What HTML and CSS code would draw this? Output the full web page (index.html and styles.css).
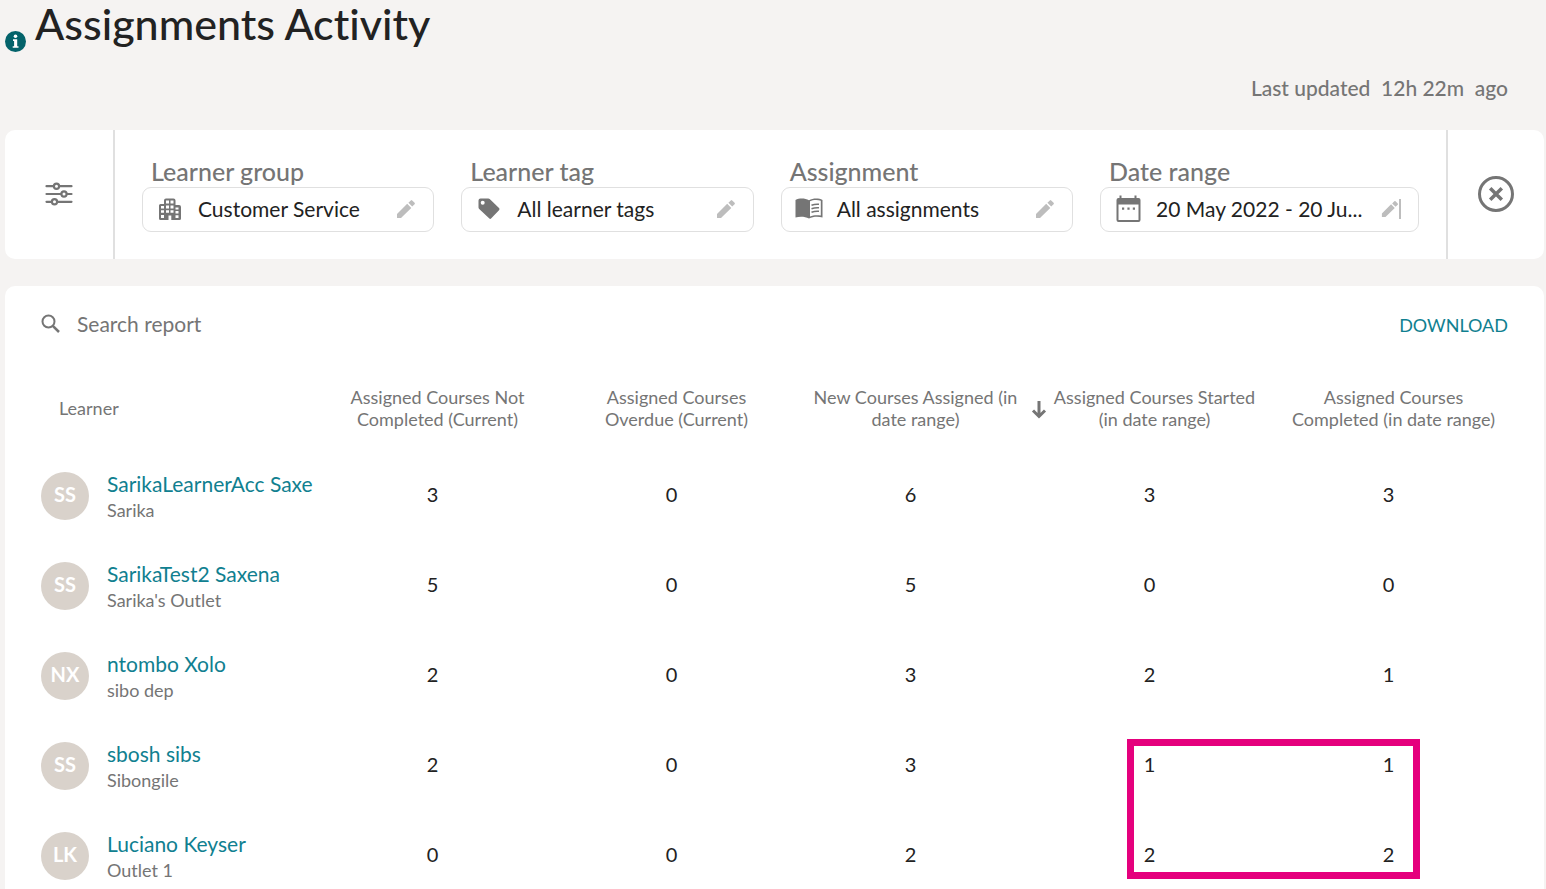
FILE: index.html
```html
<!DOCTYPE html>
<html lang="en">
<head>
    <meta charset="UTF-8">
    <meta name="viewport" content="width=device-width, initial-scale=1.0">
    <title>Assignments Activity</title>
    <link rel="stylesheet" href="styles.css">
</head>
<body>
    <svg class="sprite" aria-hidden="true">
        <symbol id="pencil" viewBox="0 0 20 20">
            <path d="M1 15V19h4L15.300 9 11.200 4.800zM18.600 5.200a1 1 0 0 0 0-1.400l-2.400-2.400a1 1 0 0 0-1.400 0L12.400 3.800l3.800 3.800z"/>
        </symbol>
    </svg>

    <header class="page-header">
        <svg class="info-icon" viewBox="0 0 21 21">
            <circle cx="10.500" cy="10.500" r="10.500" fill="#04636b"/>
            <circle cx="10.500" cy="5.300" r="1.800" fill="#fff"/>
            <path d="M8 8.300h4.200v6.900h1.300v1.600H7.700v-1.600h1.400V9.900H8z" fill="#fff"/>
        </svg>
        <h1>Assignments Activity</h1>
    </header>
    <p class="updated">Last updated&nbsp; 12h 22m&nbsp; ago</p>

    <section class="filters">
        <button class="filters-toggle" aria-label="Filters">
            <svg width="28" height="24" viewBox="0 0 28 24" fill="#fff" stroke="#757575" stroke-width="2.200">
                <path d="M1.500 4.200h25M1.500 12h25M1.500 19.800h25" stroke-linecap="round"/>
                <circle cx="11.500" cy="4.200" r="2.600"/>
                <circle cx="19" cy="12" r="2.600"/>
                <circle cx="9.500" cy="19.800" r="2.600"/>
            </svg>
        </button>
        <div class="filters-fields">
            <div class="field">
                <label for="group">Learner group</label>
                <button id="group" class="picker">
                    <svg class="picker-icon" width="28" height="28" viewBox="0 0 28 28">
                        <path d="M10 3.500h7.500a2 2 0 0 1 2 2V10H23a2 2 0 0 1 2 2v11.500a1.500 1.500 0 0 1-1.500 1.500h-19A1.500 1.500 0 0 1 3 23.500V10.500A1.500 1.500 0 0 1 4.500 9H8V5.500a2 2 0 0 1 2-2z"/>
                        <path fill="#fff" d="M10 5.500h3v3h-3zM14.500 5.500h3v3h-3zM10 10.500h3v3h-3zM14.500 10.500h3v3h-3zM10 15.200h3v2.600h-3zM14.500 15.200h3v2.600h-3zM5 11h3v2.500H5zM5 15.200h3v2.600H5zM5 20h3v3H5zM19.500 12.500h3v2h-3zM19.500 16h3v2.500h-3zM19.500 20.200h3v2.800h-3zM12.500 20.500h2.800V25h-2.800z"/>
                    </svg>
                    <span>Customer Service</span>
                    <svg class="pencil"><use href="#pencil"/></svg>
                </button>
            </div>
            <div class="field">
                <label for="tag">Learner tag</label>
                <button id="tag" class="picker">
                    <svg class="picker-icon" width="28" height="28" viewBox="0 0 28 28">
                        <path fill-rule="evenodd" d="M5.500 3.500h7.800a2 2 0 0 1 1.400.600l9.300 9a1.500 1.500 0 0 1 0 2.200l-7.700 8a1.500 1.500 0 0 1-2.200 0L4.200 14a2 2 0 0 1-.7-1.500v-7a2 2 0 0 1 2-2zM7.700 5.800a2 2 0 1 0 0 4 2 2 0 0 0 0-4z"/>
                    </svg>
                    <span>All learner tags</span>
                    <svg class="pencil"><use href="#pencil"/></svg>
                </button>
            </div>
            <div class="field">
                <label for="assignment">Assignment</label>
                <button id="assignment" class="picker">
                    <svg class="picker-icon" width="28" height="28" viewBox="0 0 28 28">
                        <path d="M.5 5C4 3 10 3 14 5.200 18 3 24 3 27.500 5v17.500c-4-1-9.500-1-13.500 1-4-2-9.500-2-13.500-1z"/>
                        <path fill="#fff" d="M15 6.300c3-1.400 7.500-1.600 10.800-.5v14.800c-3.500-.8-7.600-.5-10.800.8z"/>
                        <path fill="none" stroke="#757575" stroke-width="1.500" d="M16.500 10.300q3.500-1.400 7.500-1M16.500 13.800q3.500-1.400 7.500-1M16.500 17.300q3.500-1.400 7.500-1"/>
                    </svg>
                    <span>All assignments</span>
                    <svg class="pencil"><use href="#pencil"/></svg>
                </button>
            </div>
            <div class="field">
                <label for="range">Date range</label>
                <button id="range" class="picker">
                    <svg class="picker-icon" width="28" height="28" viewBox="0 0 28 28">
                        <path fill-rule="evenodd" d="M5.500.500h2V3h13V.500h2V3h2A2 2 0 0 1 26.500 5v20a2 2 0 0 1-2 2h-20a2 2 0 0 1-2-2V5a2 2 0 0 1 2-2h1zM4.500 9.500V25h20V9.500z"/>
                        <path d="M8 12.500h2.200v2.200H8zM13.400 12.500h2.200v2.200h-2.200zM18.800 12.500H21v2.200h-2.200z"/>
                    </svg>
                    <span>20 May 2022 - 20 Ju...</span>
                    <svg class="pencil pencil-bar"><use href="#pencil"/></svg>
                </button>
            </div>
        </div>
        <button class="filters-clear" aria-label="Clear filters">
            <svg width="36" height="36" viewBox="0 0 36 36" fill="none" stroke="#757575">
                <circle cx="18" cy="18" r="16.500" stroke-width="3"/>
                <path d="M12.200 12.200l11.600 11.600M23.800 12.200L12.200 23.800" stroke-width="3.500"/>
            </svg>
        </button>
    </section>

    <section class="report">
        <div class="toolbar">
            <label for="search" aria-label="Search report">
                <svg width="20" height="20" viewBox="0 0 20 20" fill="none" stroke="#757575" stroke-width="2">
                    <circle cx="7.500" cy="7.500" r="6"/>
                    <path d="M11.800 11.800l6.200 6.200" stroke-width="2.500"/>
                </svg>
            </label>
            <input type="text" id="search" placeholder="Search report">
            <button class="download">DOWNLOAD</button>
        </div>
        <table>
            <thead>
                <tr>
                    <th class="learner">Learner</th>
                    <th>Assigned Courses Not<br>Completed (Current)</th>
                    <th>Assigned Courses<br>Overdue (Current)</th>
                    <th>New Courses Assigned (in<br>date range)</th>
                    <th class="sorted">
                        <svg class="sort-arrow" viewBox="0 0 16 18" fill="none" stroke="#757575" stroke-width="3">
                            <path d="M8 0v15M2 9.500l6 6 6-6"/>
                        </svg>
                        Assigned Courses Started<br>(in date range)
                    </th>
                    <th>Assigned Courses<br>Completed (in date range)</th>
                </tr>
            </thead>
            <tbody>
                <tr>
                    <td>
                        <div class="person">
                            <span class="avatar">SS</span>
                            <div class="person-text"><a href="#">SarikaLearnerAcc Saxe</a><small>Sarika</small></div>
                        </div>
                    </td>
                    <td>3</td><td>0</td><td>6</td><td>3</td><td>3</td>
                </tr>
                <tr>
                    <td>
                        <div class="person">
                            <span class="avatar">SS</span>
                            <div class="person-text"><a href="#">SarikaTest2 Saxena</a><small>Sarika's Outlet</small></div>
                        </div>
                    </td>
                    <td>5</td><td>0</td><td>5</td><td>0</td><td>0</td>
                </tr>
                <tr>
                    <td>
                        <div class="person">
                            <span class="avatar">NX</span>
                            <div class="person-text"><a href="#">ntombo Xolo</a><small>sibo dep</small></div>
                        </div>
                    </td>
                    <td>2</td><td>0</td><td>3</td><td>2</td><td>1</td>
                </tr>
                <tr>
                    <td>
                        <div class="person">
                            <span class="avatar">SS</span>
                            <div class="person-text"><a href="#">sbosh sibs</a><small>Sibongile</small></div>
                        </div>
                    </td>
                    <td>2</td><td>0</td><td>3</td><td class="marked">1<span class="highlight"></span></td><td>1</td>
                </tr>
                <tr>
                    <td>
                        <div class="person">
                            <span class="avatar">LK</span>
                            <div class="person-text"><a href="#">Luciano Keyser</a><small>Outlet 1</small></div>
                        </div>
                    </td>
                    <td>0</td><td>0</td><td>2</td><td>2</td><td>2</td>
                </tr>
            </tbody>
        </table>
    </section>
</body>
</html>
```
FILE: styles.css
```css
* {
    box-sizing: border-box;
}
body {
    margin: 0;
    padding: 0 2px 0 5px;
    background: #f5f3f2;
    color: #222;
    font-family: Lato, sans-serif;
    font-size: 21px;
    font-variant-ligatures: none;
}
button, input {
    font: inherit;
    font-variant-ligatures: none;
    color: inherit;
    background: none;
    border: none;
    padding: 0;
}
button {
    cursor: pointer;
}
.sprite {
    display: none;
}
.page-header {
    display: flex;
    align-items: flex-end;
    gap: 9px;
    height: 52px;
}
.info-icon {
    width: 21px;
    height: 21px;
}
h1 {
    margin: 0;
    font-size: 43px;
    font-weight: 500;
    line-height: 56px;
}
.updated {
    margin: 23px 36px 29px;
    color: #757575;
    font-weight: 500;
    line-height: 26px;
    text-align: right;
}

/* Filter bar */
.filters {
    display: flex;
    height: 129px;
    background: #fff;
    border-radius: 10px;
}
.filters-toggle {
    width: 110px;
    padding-top: 2px;
    border-right: 2px solid #e0e0e0;
}
.filters-clear {
    width: 98px;
    padding-top: 2px;
    border-left: 2px solid #e0e0e0;
}
.filters-fields {
    flex: 1;
    display: grid;
    grid-template-columns: 11fr 11fr 11fr 12fr;
    gap: 27px;
    padding: 27px;
}
.field label {
    display: block;
    padding: 0 0 2px 9px;
    color: #757575;
    font-size: 25px;
    font-weight: 500;
    line-height: 28px;
}
.picker {
    display: flex;
    align-items: center;
    width: 100%;
    height: 45px;
    padding: 0 17px 2px 13px;
    border: 1px solid #e0e0e0;
    border-radius: 9px;
}
.picker span {
    flex: 1;
    margin-left: 14px;
    text-align: left;
    white-space: nowrap;
}
.picker-icon {
    fill: #757575;
}
.pencil {
    width: 20px;
    height: 20px;
    fill: #bdbdbd;
}
.pencil-bar {
    border-right: 2px solid #bdbdbd;
}

/* Report */
.report {
    margin-top: 27px;
    padding: 0 31px 27px 36px;
    background: #fff;
    border-radius: 10px 10px 0 0;
}
.toolbar {
    display: flex;
    align-items: center;
    height: 76px;
    margin: 0 5px 6px 0;
}
.toolbar label {
    display: flex;
}
.toolbar input {
    flex: 1;
    margin-left: 16px;
    padding-bottom: 2px;
}
.toolbar input::placeholder {
    color: #757575;
}
.download {
    padding-top: 2px;
    color: #108090;
    font-size: 18px;
}
table {
    width: 100%;
    table-layout: fixed;
    border-collapse: collapse;
}
th {
    height: 82px;
    padding: 0 0 2px;
    color: #757575;
    font-size: 18px;
    font-weight: 400;
    line-height: 22px;
    white-space: nowrap;
}
th.learner {
    width: 277px;
    padding-left: 18px;
    text-align: left;
}
td {
    height: 90px;
    padding: 0 10px 2px 0;
    font-size: 20px;
    text-align: center;
}
td:first-child {
    text-align: left;
}
.sorted, .marked {
    position: relative;
}
.sort-arrow {
    position: absolute;
    top: 33px;
    left: -4px;
    width: 16px;
    height: 18px;
}
.person {
    display: flex;
    align-items: center;
    gap: 18px;
    padding-top: 4px;
}
.person-text {
    padding-top: 2px;
    white-space: nowrap;
}
.person a, .person small {
    display: block;
    line-height: 27px;
}
.person a {
    color: #108090;
    font-size: 21px;
    text-decoration: none;
}
.person small {
    color: #757575;
    font-size: 18px;
}
.avatar {
    flex: none;
    width: 48px;
    height: 48px;
    border-radius: 50%;
    background: #d9d2cb;
    color: #fff;
    font-weight: 700;
    line-height: 44px;
    text-align: center;
}
/* Frame around the started and completed counts of the last two rows */
.highlight {
    position: absolute;
    top: 19px;
    left: 92px;
    width: 293px;
    height: 140px;
    border: 7px solid #e5007d;
    z-index: 1;
}
```
